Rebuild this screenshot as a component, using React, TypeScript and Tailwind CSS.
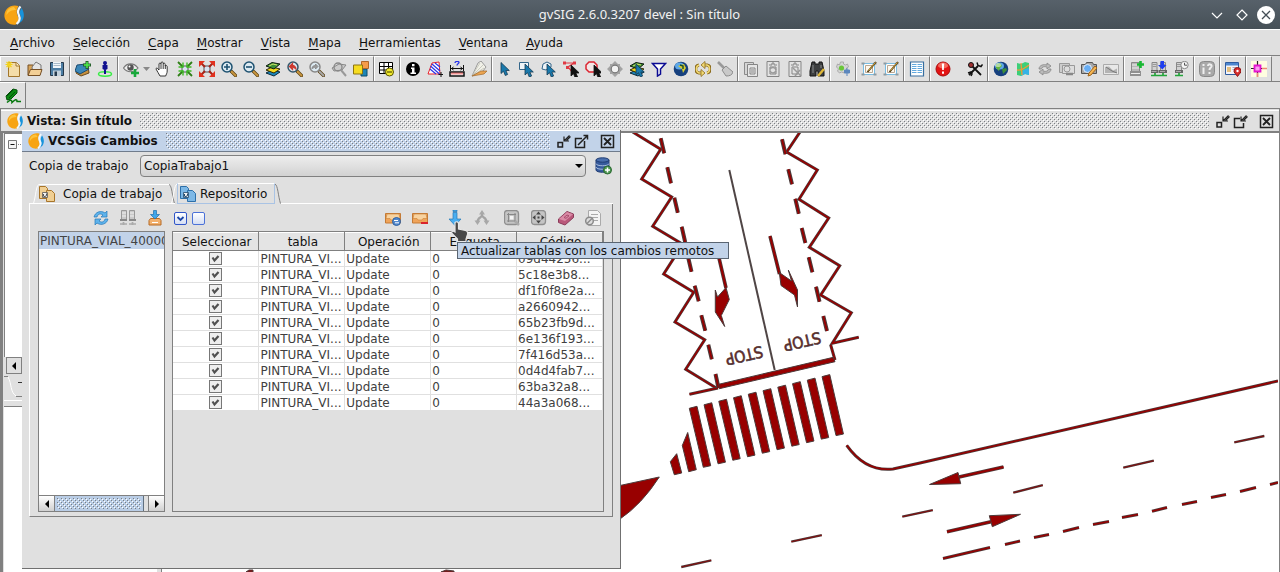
import React from "react";

type Kids = { children?: React.ReactNode };

const BUMPS =
  "bg-[length:4px_4px] bg-[position:0_0,2px_2px,1px_1px,3px_3px] bg-[image:conic-gradient(from_0deg_at_1px_1px,transparent_75%,#7a7e83_0),conic-gradient(from_0deg_at_1px_1px,transparent_75%,#7a7e83_0),conic-gradient(from_0deg_at_1px_1px,transparent_75%,#ffffff_0),conic-gradient(from_0deg_at_1px_1px,transparent_75%,#ffffff_0)]";

function Ic({ children }: Kids) {
  return (
    <svg viewBox="0 0 16 16" className="h-4 w-4 shrink-0" fill="none" aria-hidden="true">
      {children}
    </svg>
  );
}

function Logo() {
  return (
    <svg viewBox="0 0 20 20" className="h-full w-full" aria-hidden="true">
      <path d="M14.500 1C6 -1.500 -.5 5 .5 12C1.500 17.500 6.500 20.500 12 19.500C15 17 15.500 14 14 11.500C12 8 12.500 4.500 14.500 1Z" fill="#f7a413" />
      <path d="M10 2C5 2 2 6 2.500 10C5 6 8 5 12 5Z" fill="#fdc33c" />
      <path d="M17.500 3C20.500 7 20.500 12.500 18 16L14 19C16.500 16 17.800 13 16.500 10.500C15 8 16 5.500 17.500 3Z" fill="#1793dc" />
      <path d="M16.500 1.500C13 5 13.500 7.500 15 10.500C16.500 14 15 17 12.500 19" fill="none" stroke="#f0f8fe" strokeWidth="2.200" />
    </svg>
  );
}

const lens = (c: string, h: string, mark: React.ReactNode) => (
  <>
    <path d="M10 10l4.500 4.500" stroke="#5a4010" strokeWidth="3.200" strokeLinecap="round" />
    <path d="M10.500 10.500l4 4" stroke={h} strokeWidth="1.800" strokeLinecap="round" />
    <circle cx="6" cy="6" r="5" fill="#dceaf2" stroke={c} strokeWidth="1.500" />
    {mark}
  </>
);
const cursor = (x: number, y: number, f: string, s = "#173a52") => (
  <path transform={`translate(${x} ${y})`} d="M0 0v11l2.500-2.300L4.300 13l2.300-1L4.900 8H8.300z" fill={f} stroke={s} strokeWidth=".8" />
);
const layers = (
  <>
    <path d="M1 12l6-3 8 2-6 4z" fill="#1a86bd" stroke="#0b2a3a" />
    <path d="M1 9l6-3 8 2-6 4z" fill="#f5d91c" stroke="#2d2a06" />
    <path d="M1 5l6-3.500L15 3l-6 5z" fill="#3b8f35" stroke="#101d10" />
    <path d="M4 5l4-2 4 1" stroke="#d7e66b" />
  </>
);
const server = (x: number) => (
  <g transform={`translate(${x} 0)`}>
    <path d="M1.500 1.500h5v8h-5z" fill="#d2d2d2" stroke="#888" />
    <path d="M2 3.500h4M2 5.500h4" stroke="#999" />
    <path d="M0 9h8v3H0z" fill="#666" />
    <path d="M1 10.500h5" stroke="#aaa" />
  </g>
);
const net = (x: number) => (
  <path transform={`translate(${x} 0)`} d="M0 14.500h8M4 12v3" stroke="#23a53a" strokeWidth="1.700" />
);
const gdoc = (
  <>
    <path d="M2 .5h12v15H2z" fill="#e2e2e2" stroke="#858585" />
    <path d="M4 4h3V2h2v2h3M5 6h6v7H5z" stroke="#858585" />
  </>
);
const draft = (
  <>
    <path d="M2.500 2.500h11v11h-11z" fill="#fff" stroke="#79bde2" />
    <path d="M4.500 4.500h7v7h-7z" fill="#fff8ec" stroke="#b9a894" />
    <path d="M.5 1.500h3v2h-3zM12.500 1.500h3v2h-3zM.5 12.500h3v2h-3zM12.500 12.500h3v2h-3z" fill="#8f9aa0" />
    <path d="M6.500 11L15 1" stroke="#493812" strokeWidth="1.800" />
    <path d="M7.500 9.500L14.500 1.500" stroke="#d9a93e" />
  </>
);
const globe = (
  <>
    <circle cx="8" cy="8" r="7.300" fill="#16407e" />
    <ellipse cx="6.500" cy="5" rx="4.500" ry="3.500" fill="#5da8e8" />
  </>
);

type Tool = { n: string; w?: boolean; a?: boolean; i: React.ReactNode };
const groups: Tool[][] = [
  [
    { n: "Nuevo", i: <><path d="M3.500 1.500h8l3 3v11h-11z" fill="#f4dda9" stroke="#a2762c" /><path d="M11 1.500v3.500h3.500" fill="#fff3d1" stroke="#a2762c" /><path d="M4 0v7M.5 3.500h7M1.500 1l5 5M6.500 1l-5 5" stroke="#f3d21b" strokeWidth="1.200" /></> },
    { n: "Abrir", i: <><path d="M1 14V4h5l1 2h6v8z" fill="#d9a65b" stroke="#765026" /><path d="M5 6l4-5 5 3v7l-8 2z" fill="#e4e4e4" stroke="#777" /><path d="M1 14.500l2.500-6H15l-2 6z" fill="#f2cf96" stroke="#765026" /></> },
    { n: "Guardar", i: <><path d="M1.500 1.500h13v13h-13z" fill="#4d7ea4" stroke="#26394b" /><path d="M4 1h8v6H4z" fill="#f1f6fa" /><path d="M4.500 2.500h7M4.500 4.500h7" stroke="#a8bac8" /><path d="M4 9.500h8V15H4z" fill="#c3d1dc" /><path d="M5.500 10.500h2.500V15H5.500z" fill="#26394b" /></> },
  ],
  [
    { n: "Añadir capa", i: <><path d="M1 12l2-6 10-1 1 7-8 3z" fill="#c68f3c" stroke="#6c4a1a" /><path d="M0 10l2-6 9-1 3 5-9 5z" fill="#3986b8" stroke="#1b4b70" /><path d="M12 0v8M8 4h8" stroke="#25612b" strokeWidth="3" /><path d="M12 1v6M9 4h6" stroke="#4eec4b" strokeWidth="1.500" /></> },
    { n: "Centrar vista en un punto", i: <><ellipse cx="8" cy="13" rx="6.500" ry="2.200" stroke="#38ed45" strokeWidth="1.500" /><path d="M7 3h2v10H7zM5.500 4h5v4l-2 1h-1l-2-1z" fill="#10108e" /><circle cx="8" cy="2" r="2" fill="#10108e" /></> },
  ],
  [
    { n: "Visibilidad", w: true, a: true, i: <><path d="M.5 7C4 1.500 11 1.500 15 7C11 12 4 12 .5 7Z" fill="#ededed" stroke="#777" strokeWidth="1.200" /><circle cx="7.500" cy="6.500" r="3.200" fill="#555" /><circle cx="6.500" cy="5.500" r="1" fill="#fff" /><path d="M12 8v8M8 12h8" stroke="#18a83b" strokeWidth="2.600" /></> },
    { n: "Desplazamiento", i: <path d="M5 15L3 11.500 1 8c0-1.300 1.400-1.300 2 0l1 1V3c.2-1.300 1.700-1.300 2 0V2c.3-1.500 2-1.500 2.200 0v1c.4-1.200 2-1 2 .3V5c.6-1 2-.5 2 .7V10c0 2.500-1.200 3.500-1.500 5z M6 3v5M8.200 3v5M10.300 4.500V8" fill="#fff" stroke="#222" strokeWidth=".9" /> },
    { n: "Zoom a selección", i: <><path d="M5 5h6v6H5z" stroke="#555" fill="#d9e2f2" /><path d="M1 1l5 5M15 1l-5 5M1 15l5-5M15 15l-5-5" stroke="#2f7f17" strokeWidth="1.800" /><path d="M6 1.500V6H1.500M10 1.500V6h4.500M6 14.500V10H1.500M10 14.500V10h4.500" stroke="#3dbb24" strokeWidth="1.400" /></> },
    { n: "Zoom completo", i: <><path d="M5 5h6v6H5z" stroke="#555" fill="#d9e2f2" /><path d="M2 2l4 4M14 2l-4 4M2 14l4-4M14 14l-4-4" stroke="#a82418" strokeWidth="2" /><path d="M0 0h6L0 6zM16 0h-6l6 6zM0 16h6l-6-6zM16 16h-6l6-6z" fill="#e2321f" /></> },
    { n: "Acercar", i: lens("#1e5271", "#c9963f", <path d="M6 3v6M3 6h6" stroke="#1e5271" strokeWidth="1.600" />) },
    { n: "Alejar", i: lens("#1e5271", "#c9963f", <path d="M3 6h6" stroke="#1e5271" strokeWidth="1.600" />) },
    { n: "Zoom a capa", i: layers },
    { n: "Zoom previo", i: lens("#34566a", "#c9963f", <path d="M9 8.500C9 5.500 7 4.500 5.500 4.500V2.500L2.500 5.500 5.500 8.500V6.500" fill="#cc3a30" stroke="#cc3a30" strokeWidth="1.300" />) },
    { n: "Zoom siguiente", i: lens("#888", "#aaa", <path d="M3 8c0-3 2-3.500 3.500-3.500V3L9 5.500 6.500 8V6.500" fill="#999" stroke="#888" />) },
    { n: "Localizador", i: <><path d="M1 7l7-4 7 1-4 5-8 1z" fill="#ccc" stroke="#888" /><circle cx="7" cy="6" r="4" stroke="#888" strokeWidth="1.300" /><path d="M10 9l5 6" stroke="#999" strokeWidth="2" /></> },
    { n: "Encuadres", i: <><path d="M8 8h6v7H8z" fill="#1d85b5" stroke="#0c4c6b" /><path d="M8.500.500h7v7h-7z" fill="#f59b4a" stroke="#b0672a" /><path d="M.5 4h9v9h-9z" fill="#f6dc20" stroke="#8c7410" /></> },
  ],
  [{ n: "Tabla de atributos", i: <><path d="M.5 1.500h13v11H.5zM.5 5.500h13M.5 9h13M5 1.500v11M9.500 1.500v11" fill="#fff" stroke="#000" /><circle cx="10.500" cy="11" r="4" fill="#f3eb2e" stroke="#5a5500" /><path d="M8 11h5" stroke="#5a5500" strokeWidth="1.200" /></> }],
  [
    { n: "Información", i: <><circle cx="8" cy="8" r="7" fill="#000" /><path d="M7 3h2.500v2.200H7zM6 6.500h3.500v5H11V13H5.500v-1.500H7V8H6z" fill="#fff" /></> },
    { n: "Medir área", i: <><path d="M1 13L5 2l7-1 1 12z" fill="#fff" stroke="#e8212a" /><path d="M3 8l6 5M3.500 5l9 8M5 3l8 7M8 2l5 4" stroke="#2c35e8" strokeWidth="1.200" /><path d="M14 11v5M11.500 13.500h5" stroke="#111" /></> },
    { n: "Medir distancia", i: <><path d="M1.500 4v6M14.500 4v6M2 7.500h12M4.500 6L2.500 7.500l2 1.500M11.500 6l2 1.500-2 1.500" stroke="#111" /><path d="M1 11h14v4H1z" fill="#fff" stroke="#111" strokeWidth="1.500" /><path d="M2.500 12.500h11" stroke="#d22" strokeDasharray="1 1" strokeWidth="2" /><path d="M6 2C6 0 10 0 10 1.500 10 2.500 8 2.500 8 4.500" stroke="#2430ec" strokeWidth="1.300" /></> },
    { n: "Seleccionar por buffer", i: <><path d="M1 15L7 2l3-2 5 6-3 4z" fill="#f1f1e9" stroke="#999" /><path d="M1 15L9 2M1 15l11-11M1 15l12-8" stroke="#c0c0b4" strokeWidth=".8" /><path d="M1 15l9-5 6 0-3 3z" fill="#eba450" stroke="#a0692c" strokeWidth=".7" /></> },
  ],
  [
    { n: "Selección por punto", i: cursor(4, 1.5, "#1a79ac") },
    { n: "Selección por rectángulo", i: <><path d="M.5 1.500h9v7h-9z" fill="#eef4f8" stroke="#34668a" />{cursor(6, 3, "#1a79ac")}</> },
    { n: "Selección por polígono", i: <><path d="M1 8l1-5 4-2 4 2v3L5 9z" fill="#eef4f8" stroke="#34668a" />{cursor(6, 3, "#1a79ac")}</> },
    { n: "Selección por polilínea", i: <><path d="M1 2l10 0-6 4 5 6" stroke="#e03a44" strokeWidth="1.200" /><path d="M0 .5h3v3H0zM10 .5h3v3h-3zM3 5h3v3H3z" fill="#e03a44" />{cursor(8, 4, "#111", "#111")}</> },
    { n: "Selección por círculo", i: <><path d="M4 1h5l3 3v4l-3 3H4L1 8V4z" fill="#f3e6e6" stroke="#dc2430" strokeWidth="1.500" />{cursor(9, 4, "#111", "#111")}</> },
    { n: "Selección por buffer", i: <><path d="M8 0l3 3h2v2l3 3-3 3v2h-2l-3 3-3-3H3v-2L0 8l3-3V3h2z" fill="#a3a3a3" /><circle cx="8" cy="8" r="3.800" fill="#f2f2f2" stroke="#777" strokeWidth="1.200" /></> },
    { n: "Selección por capa", i: <>{layers}{cursor(7, 3, "#1a79ac")}</> },
    { n: "Selección por atributos", i: <path d="M1.500 2.500h13L9.500 8v5l-3 2V8z" fill="#fff" stroke="#0b0b93" strokeWidth="1.500" /> },
    { n: "Selección rápida", i: <>{globe}<path d="M5 5l6-2 2 4-3 5-1-4z" fill="#d8cd2f" /><path d="M7 4l3 1v3" stroke="#1c4f2c" strokeWidth="1.500" /></> },
    { n: "Invertir selección", i: <><path d="M7 12H4C-.5 11-.5 5 4 4" stroke="#8a6a1d" strokeWidth="3" /><path d="M9 4h3c4.500 1 4.500 7 0 8" stroke="#8a6a1d" strokeWidth="3" /><path d="M7 12H4C.5 11 .5 5 4 4M9 4h3c3.500 1 3.500 7 0 8" stroke="#f2da74" strokeWidth="1.400" /><path d="M6 8.500l4 3.500-4 3.500zM10 .5L6 4l4 3.500z" fill="#f2da74" stroke="#8a6a1d" strokeWidth=".8" /></> },
    { n: "Limpiar selección", i: <><path d="M1 1l6 6" stroke="#999" strokeWidth="2.600" /><path d="M5 9l4-4 7 6c-1 3-3 4-7 4z" fill="#c9c9c9" stroke="#8d8d8d" /></> },
  ],
  [
    { n: "Copiar", i: <><path d="M1.500 1.500h9v12h-9z" fill="#d5d5d5" stroke="#8a8a8a" /><path d="M4.500 3.500h10v12h-10z" fill="#e6e6e6" stroke="#858585" /><path d="M7 7h5v6H7zM8 9h3M8 11h3" stroke="#858585" /></> },
    { n: "Pegar", i: <>{gdoc}<path d="M5 8c2-2 5-2 6 1M11 10c-2 3-5 2-6 0" stroke="#999" strokeWidth="1.500" /></> },
    { n: "Cortar", i: <>{gdoc}<path d="M6 7l8 8M13 9l-5 6" stroke="#999" strokeWidth="1.500" /></> },
    { n: "Buscar", i: <><path d="M3 1h3v2h4V1h3l2 9v5H9v-5H7v5H1v-5z" fill="#3d3f40" stroke="#141414" /><path d="M4 4v8M12 4v3" stroke="#8b8d8e" /><path d="M9 15l6-7" stroke="#e0b838" strokeWidth="2.400" /></> },
  ],
  [{ n: "Geoprocesos", i: <><path d="M5.500 1h3v2l2 1 2-1 1 3-2 1v2l-2 3-3-1-2 1-2-2 1-2-2-2 1-3 2 1z" fill="#d4d4d4" stroke="#aaa" /><circle cx="6.500" cy="7" r="2.600" fill="#6ac63a" /><path d="M12 7v8M9.500 9h5v3h-5z" fill="#5c87bd" stroke="#5c87bd" /></> }],
  [{ n: "Editar encuadre", i: draft }, { n: "Editar vista", i: draft }],
  [{ n: "Catálogo", i: <><path d="M1.500 1h13v14h-13z" fill="#fff" stroke="#386e9f" strokeWidth="1.200" /><path d="M3 3.500h4.500M8.500 3.500H13M3 5.500h4.500M8.500 5.500H13M3 7.500h4.500M8.500 7.500H13M3 9.500h4.500M8.500 9.500H13M3 11.500h4.500M8.500 11.500H13" stroke="#62a9df" /></> }],
  [
    { n: "Errores", w: true, i: <><circle cx="8" cy="8" r="7" fill="#e31414" stroke="#a80c0c" /><ellipse cx="8" cy="4.500" rx="5" ry="3" fill="#f46a5e" /><path d="M6.800 2.500h2.400L8.800 9H7.200zM7 10.500h2v2.200H7z" fill="#fff" /></> },
    { n: "Preferencias", i: <><path d="M2 14l9-9M5 5l9 9" stroke="#111" strokeWidth="1.800" /><path d="M10 1.500l1 3 3 1 1.500-2M1 12l3-1 1 2-1 2" stroke="#111" strokeWidth="1.500" /><circle cx="4" cy="4" r="2.500" fill="#a03030" stroke="#111" /></> },
  ],
  [
    { n: "Vista 3D esférica", i: <>{globe}<path d="M3 3l4-1 2 3-2 2-1 3-3-3z" fill="#63b53d" /><path d="M9 8l4-1 1 2-4 4z" fill="#3d8f38" /><ellipse cx="5" cy="4" rx="3" ry="2" fill="#fff" opacity=".5" /></> },
    { n: "Vista 3D plana", i: <><path d="M2 2l4 1 4-2 4 1v12l-4-1-4 2-4-1z" fill="#3ccf78" /><path d="M8 9l6-2v7l-4-1-4 2z" fill="#36b3e6" /><path d="M2 9c5 1 8-2 12-5M6 2l1 12" stroke="#f1993b" strokeWidth="1.300" /></> },
    { n: "Sincronizar", i: <path d="M2 8C2 4 7 3 10 4V2l4 3-4 3V6C7 5 5 6 4 8zM14 8c0 4-5 5-8 4v2l-4-3 4-3v2c3 1 5 0 6-2z" fill="#bbb" stroke="#858585" strokeWidth=".8" /> },
    { n: "Capturas enlazadas", i: <><path d="M.5 2.500h10v9H.5z" fill="#ccc" stroke="#999" /><path d="M3.500 4.500h12v8h-12z" fill="#ddd" stroke="#999" /><circle cx="8" cy="8" r="3" stroke="#999" /><path d="M7 13h7" stroke="#888" strokeWidth="2.500" /></> },
    { n: "Editar captura", i: <><path d="M.5 3.500h4l1-2h6l1 2h3v9H.5z" fill="#a7a7a7" stroke="#555" /><circle cx="6.500" cy="7.500" r="4" fill="#68aef4" stroke="#e5eefa" /><path d="M7 15l1-3 6-7 2 2-6 7z" fill="#f5b652" stroke="#a0641b" /></> },
    { n: "Perfil", i: <><path d="M.5 3.500h15v10H.5z" fill="#e8e8e8" stroke="#aaa" /><path d="M2 6l4-.5 4 4 4-2V12H2z" fill="#b4b4b4" /><path d="M3 6l6 4 5 2" stroke="#777" /></> },
  ],
  [
    { n: "Añadir servidor", i: <><path d="M2.500 1.500h8v9h-8z" fill="#b7b7b7" stroke="#888" /><path d="M3 4h7M3 7h7" stroke="#eee" /><path d="M1 10h11v5H1z" fill="#909090" /><path d="M2 12.500h9" stroke="#eee" /><path d="M11.500 0v7M8 3.500h7" stroke="#18b832" strokeWidth="2.600" /></> },
    { n: "Descargar", i: <>{server(-.5)}{server(8)}{net(0)}{net(8)}<path d="M9.500 0h3.500v4h2.500l-4.200 4.500L7 4h2.500z" fill="#1f3ff0" /></> },
    { n: "Historial", i: <>{server(2)}{net(2)}<circle cx="11.500" cy="4" r="3.700" fill="#f4f4f4" stroke="#888" /><path d="M11.500 1.800V4.200H14" stroke="#555" /></> },
  ],
  [{ n: "Información rápida", i: <><rect x=".5" y=".5" width="15" height="15" rx="4" fill="#a9a9a9" stroke="#8a8a8a" /><path d="M4.500 3v2M4.500 6.500V13M9 5c0-2.500 4-2 3.500.5C12 7 10.500 7 10.500 9M10.500 11v2" stroke="#efefef" strokeWidth="2" /></> }],
  [{ n: "Formulario de puntos", i: <><path d="M.5 1.500h13v12H.5z" fill="#f4f4fa" stroke="#2e5b9f" /><path d="M1 2h12v2.500H1z" fill="#4d86cf" /><path d="M2 6h4v5H2z" fill="#e3bf7f" /><path d="M7.500 6.500H12M7.500 8.500H10" stroke="#aab" /><path d="M12.500 15.500C10 12 9 11.500 9 10a3.400 3.400 0 0 1 7 0c0 1.500-1 2-3.500 5.500z" fill="#d72c2c" stroke="#8f1616" /><circle cx="12.500" cy="10" r="1.200" fill="#fff" /></> }],
  [{ n: "Referencia", i: <><path d="M0 0h16v16H0z" fill="#fffde0" /><path d="M6.500 0v16M0 7.500h13" stroke="#222" strokeWidth="1.200" /><path d="M11 7.500h5M6.500 12v4" stroke="#ee8877" strokeWidth="1.500" /><path d="M3.500 4.500h6v6h-6z" fill="#fa9af1" stroke="#e413cf" strokeWidth="1.800" /></> }],
];

const tray = (
  <><path d="M.5 3.500h15v9.500H.5z" fill="#f0a45a" stroke="#c47a35" /><path d="M2 4h12l1 4.500h-4l-1 1.500H6L5 8.500H1z" fill="#f8d3a0" stroke="#c98339" strokeWidth=".6" /></>
);
const gframe = (
  <rect x=".5" y=".5" width="14" height="14" rx="3" fill="#c4c4c4" stroke="#8f8f8f" strokeWidth="1.300" />
);
const leftTools: Tool[] = [
  { n: "Refrescar", i: <path d="M1 7C2 2 8 0 12 3l2-2v6H8l2-2C7 3 5 4 4 7zM15 9c-1 5-7 7-11 4l-2 2V9h6l-2 2c3 2 5 1 6-2z" fill="#5eb3ec" stroke="#2678b8" strokeWidth=".7" /> },
  { n: "Comparar", i: <><path d="M1.500.500h5v10h-5zM9.500.500h5v10h-5z" fill="#c9c9c9" stroke="#999" /><path d="M2 3h4M2 6h4M10 3h4M10 6h4" stroke="#f0f0f0" /><path d="M0 9h7v2H0zM9 9h7v2H9z" fill="#888" /><path d="M0 14h7M9 14h7M3.500 12v3M12.500 12v3" stroke="#aaa" strokeWidth="1.700" /></> },
  { n: "Descargar cambios", i: <><path d="M2 10.500l1.500-2h9l1.500 2v4.500H2z" fill="#f2b06d" stroke="#b66b25" /><path d="M5 12.500h6" stroke="#fff" /><path d="M6.500.500h3v4h3L8 9 3.500 4.500h3z" fill="#3fa6ea" stroke="#1c6fae" strokeWidth=".7" /></> },
];
const rightTools: Tool[] = [
  { n: "Actualizar copia", i: <>{tray}<circle cx="11.500" cy="11.500" r="4" fill="#5288cd" stroke="#30619f" /><path d="M9 10.500h4M10 12.800h4" stroke="#fff" /></> },
  { n: "Quitar", i: <>{tray}<path d="M9 13h7" stroke="#d9232b" strokeWidth="2" /></> },
  { n: "Actualizar tablas", i: <path d="M6 0h4v1.500H6zM6 2.500h4V9h4L8 15.500 2 9h4z" fill="#4aaef0" stroke="#2478b8" strokeWidth=".7" /> },
  { n: "Combinar", i: <><path d="M8 2v3C8 8 3.500 7 3.500 12M8 5c0 3 4.500 2 4.500 7" stroke="#a4a4a4" strokeWidth="2.200" /><path d="M5 4.500L8 0l3 4.500zM.5 10.500h6l-3 4.500zM9.500 10.500h6l-3 4.500z" fill="#a8a8a8" /></> },
  { n: "Zoom al cambio", i: <>{gframe}<path d="M3 4.500h9M3 11h9M4.500 3v9M11 3v9" stroke="#888" /><path d="M6 6h3.500v3.500H6z" fill="#f4f4f4" /><path d="M11 11l4 4" stroke="#aaa" strokeWidth="2.500" /></> },
  { n: "Centrar en el cambio", i: <>{gframe}<path d="M7.500 1.500l2.500 3H5zM7.500 13.500l2.500-3H5zM1.500 7.500l3-2.500v5zM13.500 7.500l-3-2.500v5zM6.500 6.500h2v2h-2z" fill="#444" /></> },
  { n: "Borrar", i: <><path d="M.5 9L9 1.500l6.500 2.500v3.500L7 15 .5 12.500z" fill="#b9587a" stroke="#8a3b59" /><path d="M1 9l8-7 6 2.300L7 11z" fill="#da8ba6" /><path d="M6 7.500l3-2.500 2 .8-3 2.500z" stroke="#a84b6c" fill="none" /></> },
  { n: "Ver detalle", i: <><path d="M3.500.500h9l3 3v12h-12z" fill="#f3f3f3" stroke="#aaa" /><path d="M6 4.500h7M6 7.500h7M9 10.500h4" stroke="#aaa" /><circle cx="4.500" cy="11" r="3.800" fill="#ddd" stroke="#8b8b8b" strokeWidth="1.500" /><path d="M2 13.500l5-5" stroke="#8b8b8b" strokeWidth="1.500" /></> },
];

function WinIcon({ kind }: { kind: "min" | "max" | "restore" | "close" }) {
  return (
    <svg viewBox="0 0 15 15" className="h-[15px] w-[15px]" fill="none" stroke="#222" strokeWidth="1.500" aria-hidden="true">
      {kind === "min" && <><path d="M2 8.500h4.500V13H2z" /><path d="M8 2.500V7h5M8.500 6.500l5-5M10.500 6.500l4-4" strokeWidth="1.200" /></>}
      {kind === "max" && <><path d="M8 4.500H1.500V13.500H10.500V7" /><path d="M4 11l9-9M9.500 1.500h4v4" /></>}
      {kind === "restore" && <><path d="M7 4.500H1.500V13.500H10.500V9" /><path d="M8 2.500V7h5M8.500 6.500l5-5M10.500 6.500l4-4" strokeWidth="1.200" /></>}
      {kind === "close" && <><path d="M1.500 1.500h12v12h-12z" /><path d="M4 4l7 7M11 4l-7 7" strokeWidth="1.800" /></>}
    </svg>
  );
}

function FrameTitle({ title, active }: { title: string; active?: boolean }) {
  return (
    <header className={"flex h-[22px] shrink-0 items-center border-t border-b border-t-white pr-[5px] pl-1.5 " + (active ? "border-b-[#707c8c] bg-[#c2d3e9]" : "border-b-[#808080]")}>
      <span className="h-4 w-4 shrink-0"><Logo /></span>
      <h2 className="ml-1 shrink-0 text-xs font-bold whitespace-nowrap">{title}</h2>
      <div className={"ml-2 h-4 flex-1 " + BUMPS} />
      <div className="ml-1.5 flex items-center gap-[3px]">
        <button aria-label="Minimizar"><WinIcon kind="min" /></button>
        <button aria-label="Maximizar"><WinIcon kind={active ? "max" : "restore"} /></button>
        <button aria-label="Cerrar" className="ml-2"><WinIcon kind="close" /></button>
      </div>
    </header>
  );
}

const menus = ["Archivo", "Selección", "Capa", "Mostrar", "Vista", "Mapa", "Herramientas", "Ventana", "Ayuda"];

const outlines = [
  "M632.700 132L660.700 149.300 641.700 179 671.700 197 652.700 226.300 682.700 244.300 663.700 274 693.700 292.300 675 322 704.700 339.700 685.700 369.300 716.700 388.300",
  "M800 132L786.700 152 817.300 170 799 199.300 828.700 218 809.300 247.300 839.700 265.700 820.700 295 851.300 312.700 832.300 343.300 858.700 337.300M830.700 345L835 360",
  "M689.500 394.300L718 388",
  "M846.700 445.300C860 464 875 471 893 469L920 463 1278 381",
  "M943 558.500L990 547.500M1005 544.500L1020 541M1034 537.500L1049 534.500M1063 531.500L1079 527.500M1093 524.500L1109 521.500M1122 517.500L1138 514.500M1152 511.300L1167 507.500M1182 504.500L1197 501.500M1211 497.500L1226 494.500M1240 491.500L1256 487.500M1270 484.500L1278 482.500",
];
const dashes = "M660.700 138.300l3.500 15M667.300 167.300l3.700 16M674.300 197.700l3.500 15M681.700 226.700l3.500 15.500M688 256.700l3.500 15M694.700 285.700l4 15.500M701.300 315.300l4 15.500M708.300 344.700l3.500 14.500M715.500 374l3 14M782 139.300l3.500 15M788.300 169.300l3.700 15M795.300 198.700l3.500 15M801.700 228l3.700 15M808.700 257.300l3.700 15M816 286.700l3.500 15M823.300 316l3.700 15";
const thin = "M902.300 516.700l30.500-6.500M1013.300 492.700l29.500-7.500M1123.300 467.700l30.500-7M1234.300 442.300l30-6.300M681.300 567l30-6.700M791.300 541.700l30.500-6.500";
const solids = [
  "M715.300 290L717.500 297 726 287.500 729.300 299.500 721.300 315.500 724.700 326.500 715.300 312Z",
  "M779.300 272.500L791.500 281 788.300 270 797.500 290 797.500 307 794.500 295 781 285.500Z",
  "M718.700 384.300L833.300 357.300 835 361.700 719.300 388.700Z",
  "M620 485.500L659.300 477Q642 504 620 519Z",
  "M682.300 445.500L687.700 432.500 696.300 469.700 688.700 471.700Z",
  "M670.300 461.700L676.700 453.700 681.700 473 674.300 474.700Z",
  "M929.500 484.500L958 472.500 960.700 483.700Z",
  "M989.300 515.700L1020.500 514.300 992.300 526.700Z",
];
const shafts = "M719 258l7 30M770 236l9.500 38M1003.500 467L959 477M947 531.700l44-10";

function RoadMap() {
  return (
    <svg viewBox="162 133 1116 439" className="h-[439px] w-[1116px] shrink-0" fill="none" role="img" aria-label="Mapa de pintura vial">
      {outlines.map((d) => (
        <g key={d}>
          <path d={d} stroke="#4b3a3a" strokeWidth="3" />
          <path d={d} stroke="#980000" strokeWidth="1.500" />
        </g>
      ))}
      <path d={dashes} stroke="#4b3a3a" strokeWidth="4" />
      <path d={dashes} stroke="#980000" strokeWidth="1.800" />
      <path d={thin} stroke="#4b3a3a" strokeWidth="2.400" />
      <path d={thin} stroke="#980000" strokeWidth=".8" />
      <path d="M729.300 170L774.700 370" stroke="#4f4545" strokeWidth="2" />
      <path d={shafts} stroke="#4b3a3a" strokeWidth="3.600" />
      <path d={shafts} stroke="#980000" strokeWidth="2" />
      {solids.map((d) => (
        <path key={d} d={d} fill="#980000" stroke="#4b3a3a" strokeWidth="1" />
      ))}
      {Array.from({ length: 10 }, (_, i) => (
        <path key={i} transform={`translate(${i * 14.75} ${i * -3.52})`} d="M689.300 408.300L697 406.300 710.700 465.700 703.300 467.300Z" fill="#980000" stroke="#4b3a3a" strokeWidth="1" />
      ))}
      <path d="M246 572l3-2h4v2zM441 572l5-2 8 1v1z" fill="#980000" stroke="#4b3a3a" />
      <g fontFamily="'Liberation Sans Narrow', 'DejaVu Sans Condensed', sans-serif" fontSize="16" fill="#6a2323" stroke="#4b3a3a" strokeWidth=".6" textAnchor="middle">
        <text transform="translate(743 350) rotate(167)">STOP</text>
        <text transform="translate(801 336) rotate(167)">STOP</text>
      </g>
    </svg>
  );
}

function Check() {
  return (
    <span className="mx-auto grid h-[13px] w-[13px]">
      <input type="checkbox" defaultChecked aria-label="Seleccionar" className="col-start-1 row-start-1 h-[13px] w-[13px] appearance-none border border-[#777] bg-[#eeeeee]" />
      <svg viewBox="0 0 13 13" className="pointer-events-none col-start-1 row-start-1 h-[13px] w-[13px]" aria-hidden="true">
        <path d="M3.500 5.500l2 3L9.500 4" fill="none" stroke="#505050" strokeWidth="2.200" />
      </svg>
    </span>
  );
}

const codes = ["09d44256...", "5c18e3b8...", "df1f0f8e2a...", "a2660942...", "65b23fb9d...", "6e136f193...", "7f416d53a...", "0d4d4fab7...", "63ba32a8...", "44a3a068..."];
const heads = ["Seleccionar", "tabla", "Operación", "Etiqueta", "Código"];
const CELL = "border-r border-b border-[#e0e0e0] p-0 pt-px pl-px leading-[14px]";

function Arrow({ d }: { d: string }) {
  return (
    <svg viewBox="0 0 10 10" className="h-2.5 w-2.5" aria-hidden="true"><path d={d} fill="#000" /></svg>
  );
}

function TabEdge({ right }: { right?: boolean }) {
  return (
    <svg viewBox="0 0 6 20" className="h-full w-1.5 shrink-0" fill="none" aria-hidden="true">
      {right ? <path d="M0 .5C3 2 3 12 5.500 20" stroke="#808080" /> : <path d="M.5 20C3 12 3 2 6 .5" stroke="#fff" />}
    </svg>
  );
}

const copyIcon = (a: string, b: string, c: string) => (
  <Ic>
    <path d="M.5.500h6l2 2v10h-8z" fill={a} stroke={b} />
    <path d="M7.500 4.500h5l3 3v8h-8z" fill={a} stroke={b} />
    <path d="M3.500 6.500h5v5h-5z" fill="#f4f4f4" stroke={c} strokeWidth=".8" />
    <path d="M5 10.500c2 0 3-1 2.500-3M4.500 8v2.500" stroke={c} strokeWidth="1.100" />
  </Ic>
);

function Dialog() {
  return (
    <section aria-label="VCSGis Cambios" className="absolute top-[130px] left-[22px] flex h-[439px] w-[599px] flex-col border-r border-b border-[#707070] bg-[#e0e0e0]">
      <FrameTitle title="VCSGis Cambios" active />
      <div className="flex items-center px-[7px] pt-[3px]">
        <label htmlFor="copia" className="w-[111px] leading-4 whitespace-nowrap">Copia de trabajo</label>
        <span className="grid flex-1">
          <select id="copia" className="col-start-1 row-start-1 h-[22px] appearance-none rounded-sm border border-[#808080] bg-linear-to-b from-[#eeeeee] to-[#d2d2d2] pl-[3px] leading-4">
            <option>CopiaTrabajo1</option>
          </select>
          <span className="pointer-events-none col-start-1 row-start-1 mr-0.5 self-center justify-self-end"><Arrow d="M1 3h8L5 7z" /></span>
        </span>
        <button aria-label="Añadir copia de trabajo" className="mr-px ml-2">
          <svg viewBox="0 0 18 18" className="h-[18px] w-[18px]" fill="none" aria-hidden="true">
            <path d="M2 3v10c0 3 13 3 13 0V3z" fill="#375b9d" stroke="#203d74" />
            <ellipse cx="8.500" cy="3" rx="6.500" ry="2.200" fill="#4a6fae" stroke="#203d74" />
            <path d="M2 6.500c0 3 13 3 13 0M2 10c0 3 13 3 13 0" stroke="#a8bddd" />
            <circle cx="13.500" cy="13" r="4" fill="#4c9650" stroke="#2c6a32" /><path d="M13.500 10.500v5M11 13h5" stroke="#fff" strokeWidth="1.500" />
          </svg>
        </button>
      </div>
      <div role="tablist" className="mx-[7px] mt-[6px] flex h-[21px] shrink-0">
        <span className="w-1 border-b border-white" />
        <button role="tab" className="flex w-[142px] items-stretch border-b border-white pt-px leading-4">
          <TabEdge />
          <span className="flex flex-1 items-center gap-2 border-t border-white">{copyIcon("#f0cf93", "#a8752a", "#555")}Copia de trabajo</span>
          <TabEdge right />
        </button>
        <button role="tab" aria-selected="true" className="-ml-1 flex w-[110px] items-stretch leading-4">
          <TabEdge />
          <span className="flex flex-1 items-center gap-1 border border-[#a9c3e4] border-t-white pl-0.5">{copyIcon("#7db8e6", "#2d6fa8", "#22486b")}Repositorio</span>
          <TabEdge right />
        </button>
        <span className="flex-1 border-b border-white" />
      </div>
      <div className="mx-[7px] flex h-[313px] flex-col border-r border-b border-l border-r-[#808080] border-b-[#808080] border-l-white px-2">
        <div className="flex h-[27px] shrink-0 items-center pt-px">
          <div className="ml-[55px] flex gap-[11px]">
            {leftTools.map((t) => <button key={t.n} aria-label={t.n}><Ic>{t.i}</Ic></button>)}
          </div>
          <div className="ml-[11px] flex gap-[5px]">
            <button aria-label="Marcar todo" className="h-[13px] w-[13px] rounded-xs border border-[#3156c8] bg-linear-to-b from-white to-[#d5def3]">
              <svg viewBox="0 0 11 11" className="h-[11px] w-[11px]" aria-hidden="true"><path d="M2.500 4l3 3 3-3" fill="none" stroke="#1d47a8" strokeWidth="1.800" /></svg>
            </button>
            <button aria-label="Desmarcar todo" className="h-[13px] w-[13px] rounded-xs border border-[#4c72d8] bg-linear-to-b from-white to-[#d5def3]" />
          </div>
          <div className="mr-[3px] ml-auto flex gap-[11px]">
            {rightTools.map((t) => <button key={t.n} aria-label={t.n} className={t.n === "Actualizar tablas" ? "ml-2" : t.n === "Zoom al cambio" ? "ml-[3px]" : ""}><Ic>{t.i}</Ic></button>)}
          </div>
        </div>
        <div className="flex gap-[7px]">
          <div className="flex h-[281px] w-[127px] shrink-0 flex-col border border-[#808080] bg-white">
            <div className="h-[17px] overflow-hidden bg-[#c2d3e9] pl-px leading-[18px] whitespace-nowrap text-[#444]">PINTURA_VIAL_40000</div>
            <div className="mt-auto flex h-4 border-t border-[#808080] bg-[#e0e0e0]">
              <button aria-label="Izquierda" className="grid w-4 place-items-center border-r border-[#808080] bg-linear-to-b from-white to-[#d0d0d0]"><Arrow d="M7 1v8L3 5z" /></button>
              <div className="flex flex-1 pr-1">
                <div className="flex-1 border-r border-[#607080] bg-[#b9cde6] p-0.5"><div className={"h-full " + BUMPS} /></div>
              </div>
              <button aria-label="Derecha" className="grid w-4 place-items-center border-l border-[#808080] bg-linear-to-b from-white to-[#d0d0d0]"><Arrow d="M3 1v8l4-4z" /></button>
            </div>
          </div>
          <div className="h-[281px] flex-1 overflow-hidden border border-[#808080] bg-[#e0e0e0]">
            <table className="w-full table-fixed border-collapse leading-4">
              <thead>
                <tr className="h-[18px]">
                  {heads.map((h) => <th key={h} className="h-[18px] border-t border-r border-b border-t-white border-r-[#808080] border-b-[#808080] bg-[#e4e4e4] p-0 pl-0.5 text-center font-normal">{h}</th>)}
                </tr>
              </thead>
              <tbody className="text-[#404040]">
                {codes.map((c) => (
                  <tr key={c} className="h-4 bg-white">
                    <td className="border-r border-b border-[#e0e0e0] p-0"><Check /></td>
                    <td className={CELL}>PINTURA_VI...</td>
                    <td className={CELL}>Update</td>
                    <td className={CELL}>0</td>
                    <td className={CELL}>{c}</td>
                  </tr>
                ))}
              </tbody>
            </table>
          </div>
        </div>
      </div>
    </section>
  );
}

export default function App() {
  return (
    <div className="relative flex h-screen flex-col overflow-hidden bg-[#e0e0e0] font-['DejaVu_Sans',sans-serif] text-xs text-[#111]">
      <header className="grid h-[29px] shrink-0 grid-cols-[1fr_auto_1fr] items-center bg-linear-to-b from-[#57616a] to-[#465057] pr-[5px] pl-1">
        <span className="h-5 w-5"><Logo /></span>
        <h1 className="font-['Noto_Sans',sans-serif] text-[13px] text-[#f2f2f2]">gvSIG 2.6.0.3207 devel : Sin título</h1>
        <div className="flex items-center justify-end gap-[13px]">
          <button aria-label="Minimizar"><svg viewBox="0 0 12 12" className="h-3 w-3" aria-hidden="true"><path d="M1 4l5 5 5-5" fill="none" stroke="#fff" strokeWidth="1.200" /></svg></button>
          <button aria-label="Maximizar"><svg viewBox="0 0 12 12" className="h-3 w-3" aria-hidden="true"><path d="M6 1l5 5-5 5-5-5z" fill="none" stroke="#fff" strokeWidth="1.200" /></svg></button>
          <button aria-label="Cerrar" className="-ml-1"><svg viewBox="0 0 18 18" className="h-[18px] w-[18px]" aria-hidden="true"><circle cx="9" cy="9" r="9" fill="#fff" /><path d="M5 5l8 8M13 5l-8 8" stroke="#444e56" strokeWidth="1.300" /></svg></button>
        </div>
      </header>
      <nav className="flex h-[27px] shrink-0 items-center gap-[18px] border-t border-b border-t-white border-b-[#808080] pl-2.5">
        {menus.map((m) => (
          <button key={m}><span className="underline underline-offset-2">{m[0]}</span>{m.slice(1)}</button>
        ))}
      </nav>
      <div role="toolbar" className="flex h-[26px] shrink-0 border-b border-[#808080]">
        {groups.map((g, gi) => (
          <div key={gi} className="flex items-center border-t border-r border-l border-t-white border-r-[#808080] border-l-white px-px">
            {g.map((t) => (
              <button key={t.n} aria-label={t.n} className={(t.w ? "w-8" : "w-[22px]") + " flex items-center gap-1 pl-[3px]"}>
                <Ic>{t.i}</Ic>
                {t.a && <svg viewBox="0 0 7 4" className="h-1 w-[7px]" aria-hidden="true"><path d="M0 0h7L3.500 4z" fill="#888" /></svg>}
              </button>
            ))}
          </div>
        ))}
      </div>
      <div role="toolbar" className="flex h-[27px] shrink-0 border-b border-[#808080]">
        <button aria-label="Editar" className="grid w-[26px] place-items-center border-t border-r border-t-white border-r-[#808080]">
          <Ic>
            <path d="M1 8l7-7 4 1v3l-6 6-4 1z" fill="#0a8a12" stroke="#04520a" />
            <path d="M2 8l6-6M4 10l6-6" stroke="#04520a" />
            <path d="M2 14.500c4-4 5-2 5 0 3-3 5-4 5-1h4" stroke="#07780f" strokeWidth="1.500" />
          </Ic>
        </button>
      </div>
      <main className="flex min-h-0 flex-1 flex-col border-r border-l border-[#808080] pt-px">
        <FrameTitle title="Vista: Sin título" />
        <div className="flex min-h-0 flex-1 overflow-hidden border-t border-l-2 border-[#808080]">
          <aside className="flex w-[154px] shrink-0 flex-col border-l border-[#e0e0e0] bg-white">
            <div className="h-[224px] shrink-0 border-t border-l border-[#808080] pt-1.5 pl-[3px]">
              <svg viewBox="0 0 14 10" className="h-2.5 w-3.5" aria-hidden="true"><path d="M.5.500h8v8h-8z" fill="#f4f4f4" stroke="#777" /><path d="M2.500 4.500h4" stroke="#111" /><path d="M10 4.500h4" stroke="#888" strokeDasharray="1 1" /></svg>
            </div>
            <div className="flex h-[17px] shrink-0 bg-[#e0e0e0] pl-0.5">
              <button aria-label="Izquierda" className="grid w-4 place-items-center border border-[#808080]"><Arrow d="M7 1v8L3 5z" /></button>
            </div>
            <div className="h-[26px] shrink-0 bg-[#e0e0e0]">
              <svg viewBox="0 0 20 24" className="h-6 w-5" fill="none" aria-hidden="true"><path d="M0 2.500h4" stroke="#808080" /><path d="M4 3C8 10 6 18 12 22" stroke="#fff" /><path d="M12 22.500h8" stroke="#808080" /><path d="M14 8.500h4" stroke="#333" /></svg>
            </div>
            <div className="h-[7px] shrink-0 border-t border-b border-t-white border-b-[#808080] bg-[#e0e0e0]" />
          </aside>
          <div className="w-[5px] shrink-0 border-r border-[#808080] bg-[#e0e0e0]" />
          <div className="min-w-0 flex-1 overflow-hidden bg-white"><RoadMap /></div>
        </div>
      </main>
      <Dialog />
      <div role="tooltip" className="absolute top-[242px] left-[457px] flex h-[17px] w-[272px] items-center border border-[#5a6572] bg-[#c2d3e9] pl-[3px] whitespace-nowrap">
        Actualizar tablas con los cambios remotos
      </div>
      <svg viewBox="0 0 20 22" className="pointer-events-none absolute top-[221px] left-[450px] h-[22px] w-5" aria-hidden="true">
        <path d="M5 1.500c1.500-1.500 3.500-.5 3.500 1V8l7 1.500c2 .5 2.500 2 2 4L16 18v2.500H7.500V18L2 12.500c-1-1.500.5-3 2-2l1 .5z" fill="#484848" stroke="#e8e8e8" strokeWidth="1.200" />
      </svg>
    </div>
  );
}
